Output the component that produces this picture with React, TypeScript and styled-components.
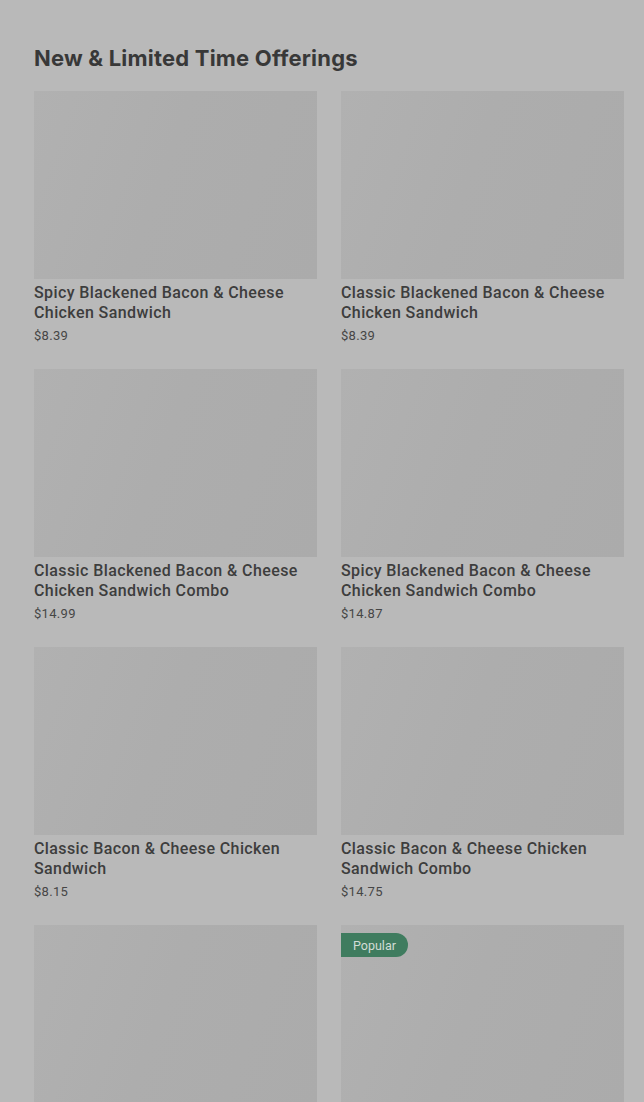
import styled, { createGlobalStyle } from "styled-components";

type Item = {
  name?: string;
  price?: string;
  badge?: string;
};

const items: Item[] = [
  { name: "Spicy Blackened Bacon & Cheese Chicken Sandwich", price: "$8.39" },
  { name: "Classic Blackened Bacon & Cheese Chicken Sandwich", price: "$8.39" },
  { name: "Classic Blackened Bacon & Cheese Chicken Sandwich Combo", price: "$14.99" },
  { name: "Spicy Blackened Bacon & Cheese Chicken Sandwich Combo", price: "$14.87" },
  { name: "Classic Bacon & Cheese Chicken Sandwich", price: "$8.15" },
  { name: "Classic Bacon & Cheese Chicken Sandwich Combo", price: "$14.75" },
  {},
  { badge: "Popular" },
];

export default function App() {
  return (
    <>
      <GlobalStyle />
      <Page>
        <Heading>New &amp; Limited Time Offerings</Heading>
        <Grid>
          {items.map((item, i) => (
            <Card key={i}>
              <Thumb>{item.badge && <Badge>{item.badge}</Badge>}</Thumb>
              {item.name && <Name>{item.name}</Name>}
              {item.price && <Price>{item.price}</Price>}
            </Card>
          ))}
        </Grid>
      </Page>
    </>
  );
}

const GlobalStyle = createGlobalStyle`
  html, body {
    margin: 0;
    background: #b9b9b9;
    overflow: hidden;
  }
`;

const Page = styled.div`
  height: 1102px;
  overflow: hidden;
  padding: 44px 20px 0 34px;
  box-sizing: border-box;
  font-family: Inter, "Noto Sans", sans-serif;
  color: #3a3a3a;
`;

const Heading = styled.h2`
  margin: 0 0 19px;
  font-size: 22px;
  line-height: 28px;
  font-weight: 700;
  letter-spacing: 0.2px;
  color: #383838;
`;

const Grid = styled.div`
  display: grid;
  grid-template-columns: 283px 283px;
  column-gap: 24px;
  row-gap: 24px;
`;

const Card = styled.div`
  display: flex;
  flex-direction: column;
  height: 254px;
`;

const Thumb = styled.div`
  position: relative;
  height: 188px;
  flex-shrink: 0;
  background: linear-gradient(110deg, #b1b1b1 0%, #adadad 45%, #ababab 100%);
`;

const Badge = styled.span`
  position: absolute;
  top: 8px;
  left: 0;
  height: 24px;
  padding: 0 12px 0 12px;
  display: flex;
  align-items: center;
  border-radius: 0 12px 12px 0;
  background: #3f7c5f;
  color: #d2dcd6;
  font-family: Roboto, "Noto Sans", sans-serif;
  font-size: 12.5px;
`;

const Name = styled.div`
  margin-top: 4px;
  font-family: Roboto, "Noto Sans", sans-serif;
  font-size: 16px;
  line-height: 20px;
  font-weight: 500;
  letter-spacing: 0.4px;
  color: #3d3d3d;
`;

const Price = styled.div`
  margin-top: 4px;
  font-family: Roboto, "Noto Sans", sans-serif;
  font-size: 13px;
  line-height: 18px;
  letter-spacing: 0.3px;
  color: #464646;
`;
